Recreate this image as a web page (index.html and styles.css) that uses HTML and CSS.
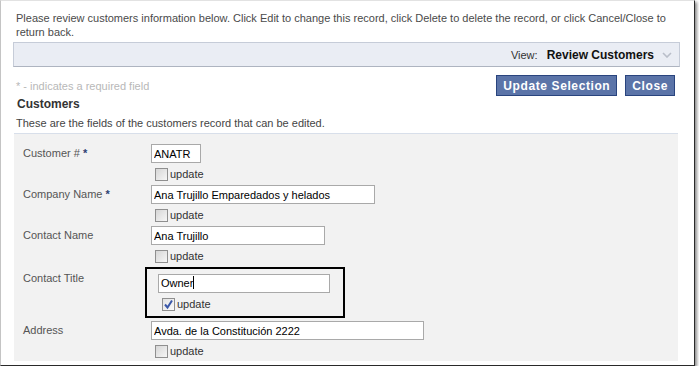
FILE: index.html
```html
<!DOCTYPE html>
<html lang="en">
<head>
    <meta charset="UTF-8">
    <title>Review Customers</title>
    <link rel="stylesheet" href="styles.css">
</head>
<body>
    <div class="frame">
        <p class="intro">Please review customers information below. Click Edit to change this record, click Delete to delete the record, or click Cancel/Close to return back.</p>

        <div class="view-bar">
            <span class="view-label">View:</span>
            <span class="view-name">Review Customers</span>
            <svg class="chevron" width="10" height="6" viewBox="0 0 10 6">
                <path d="M1 1 L5 5 L9 1" fill="none" stroke="#b9bec9" stroke-width="1.6"/>
            </svg>
        </div>

        <div class="action-row">
            <span class="required-note">* - indicates a required field</span>
            <div class="buttons">
                <button class="btn">Update Selection</button>
                <button class="btn">Close</button>
            </div>
        </div>

        <h2 class="category">Customers</h2>
        <p class="category-desc">These are the fields of the customers record that can be edited.</p>

        <div class="fields">
            <div class="field-row">
                <div class="field-label">Customer # <span class="req">*</span></div>
                <div class="field-value">
                    <input class="text-input w-cust" type="text" value="ANATR">
                    <div class="check-line"><span class="checkbox"></span>update</div>
                </div>
            </div>
            <div class="field-row">
                <div class="field-label">Company Name <span class="req">*</span></div>
                <div class="field-value">
                    <input class="text-input w-company" type="text" value="Ana Trujillo Emparedados y helados">
                    <div class="check-line"><span class="checkbox"></span>update</div>
                </div>
            </div>
            <div class="field-row">
                <div class="field-label">Contact Name</div>
                <div class="field-value">
                    <input class="text-input w-contact" type="text" value="Ana Trujillo">
                    <div class="check-line"><span class="checkbox"></span>update</div>
                </div>
            </div>
            <div class="field-row row-highlight">
                <div class="field-label">Contact Title</div>
                <div class="field-value">
                    <div class="highlight-box">
                        <div class="text-input w-title">Owner<span class="caret"></span></div>
                        <div class="check-line">
                            <span class="checkbox checked">
                                <svg width="11" height="11" viewBox="0 0 11 11">
                                    <path d="M2 5.5 L4.5 8.5 L9 1.5" fill="none" stroke="#3a57a8" stroke-width="2"/>
                                </svg>
                            </span>update
                        </div>
                    </div>
                </div>
            </div>
            <div class="field-row">
                <div class="field-label">Address</div>
                <div class="field-value">
                    <input class="text-input w-address" type="text" value="Avda. de la Constitución 2222">
                    <div class="check-line"><span class="checkbox"></span>update</div>
                </div>
            </div>
        </div>
    </div>
</body>
</html>
```

FILE: styles.css
```css
* {
    margin: 0;
    padding: 0;
    box-sizing: border-box;
}

body {
    background: #fff;
    font-family: 'Liberation Sans', Arial, sans-serif;
    font-size: 11px;
    color: #444;
    overflow: hidden;
}

.frame {
    width: 695px;
    height: 366px;
    background: #fff;
    border-left: 1px solid #c4c4c4;
    border-top: 1px solid #e2e2e2;
    border-right: 1px solid #2a2a2a;
    border-bottom: 1px solid #2a2a2a;
    box-shadow: 2px 2px 3px rgba(0, 0, 0, 0.45);
    padding: 10px 14px 0 12px;
    overflow: hidden;
}

.intro {
    padding-left: 3px;
    padding-right: 8px;
    line-height: 14px;
    color: #4a4a4a;
}

.view-bar {
    display: flex;
    align-items: center;
    justify-content: flex-end;
    height: 25px;
    margin-top: 3px;
    background: #eaedf4;
    border: 1px solid #c6ccd8;
    border-bottom-color: #aeb4c0;
    padding-right: 7px;
}

.view-label {
    color: #333;
    margin-right: 9px;
}

.view-name {
    font-weight: bold;
    font-size: 12px;
    color: #111;
    margin-right: 8px;
}

.action-row {
    display: flex;
    align-items: center;
    justify-content: space-between;
    margin-top: 8px;
    padding-left: 3px;
    padding-right: 5px;
}

.required-note {
    color: #b8b8b8;
}

.buttons {
    display: flex;
    gap: 8px;
}

.btn {
    font-family: 'Liberation Sans', Arial, sans-serif;
    font-size: 12px;
    font-weight: bold;
    color: #fff;
    background: #5b74a8;
    border: 1px solid #29447e;
    height: 21px;
    padding: 0 6px;
    letter-spacing: 0.6px;
}

.category {
    font-size: 12px;
    font-weight: bold;
    color: #333;
    padding-left: 4px;
    margin-top: 1px;
    line-height: 15px;
}

.category-desc {
    padding-left: 3px;
    margin-top: 4px;
    line-height: 14px;
    color: #444;
}

.fields {
    margin: 3px 2px 0 1px;
    background: #f2f2f2;
    border-top: 1px solid #d8dfea;
    height: 228px;
    padding: 10px 0 0 9px;
}

.field-row {
    display: grid;
    grid-template-columns: 128px 1fr;
    margin-bottom: 3px;
}

.field-label {
    color: #555;
    line-height: 19px;
}

.req {
    color: #2d3f73;
    font-weight: bold;
}

.text-input {
    display: block;
    height: 19px;
    border: 1px solid #a9a9a9;
    background: #fff;
    font-family: 'Liberation Sans', Arial, sans-serif;
    font-size: 11px;
    color: #000;
    padding: 0 2px;
    line-height: 17px;
    outline: none;
}

.w-cust { width: 50px; }
.w-company { width: 224px; }
.w-contact { width: 174px; }
.w-title { width: 172px; }
.w-address { width: 273px; }

.check-line {
    display: flex;
    align-items: center;
    height: 16px;
    margin-top: 3px;
    padding-left: 4px;
    color: #333;
}

.checkbox {
    display: inline-flex;
    align-items: center;
    justify-content: center;
    width: 13px;
    height: 13px;
    margin-right: 2px;
    border: 1px solid #8f8f8f;
    background: linear-gradient(135deg, #d6d6d6, #f6f6f6);
}

.checkbox.checked {
    background: linear-gradient(135deg, #e2e2e2, #fafafa);
}

.row-highlight .field-label {
    margin-top: 2px;
}

.highlight-box {
    width: 200px;
    margin-left: -6px;
    border: 2px solid #000;
    padding: 5px 0 4px 11px;
}

.caret {
    display: inline-block;
    width: 1px;
    height: 13px;
    background: #000;
    vertical-align: -2px;
}
```
